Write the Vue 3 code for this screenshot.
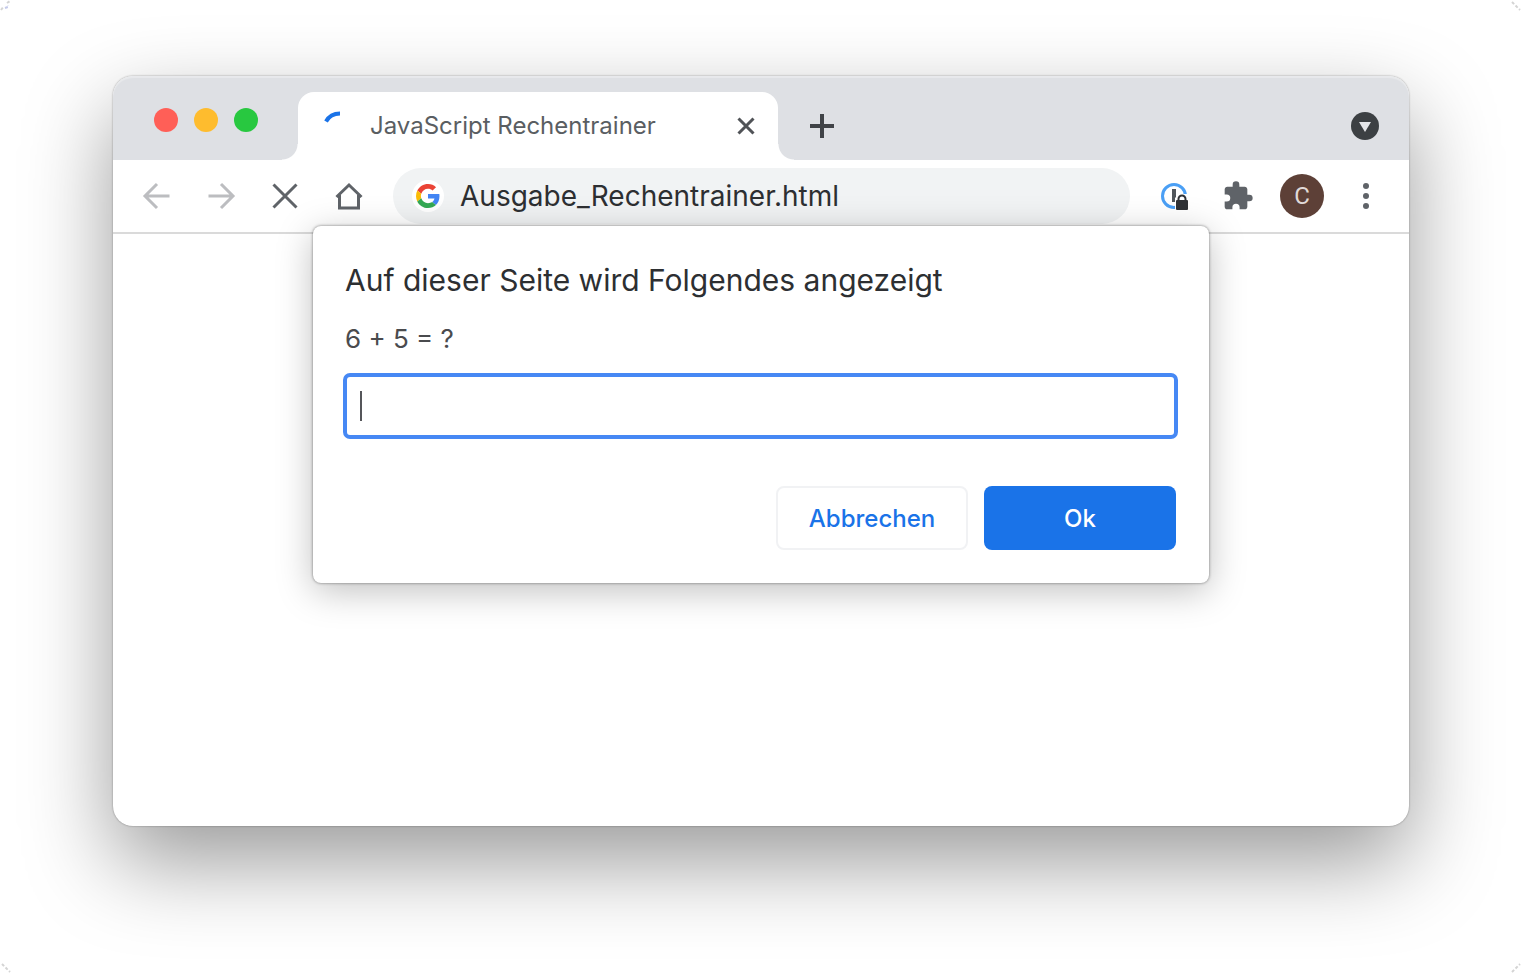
<script setup>
import { ref } from 'vue'

const address = ref('Ausgabe_Rechentrainer.html')
const answer = ref('')
</script>

<template>
  <main class="desktop">
    <svg class="mark mark-tl" viewBox="0 0 12 12" aria-hidden="true">
      <path d="M1 10L4 6M7 3l3-2" />
      <path class="tint" d="M5 8l3-1V5" />
    </svg>
    <svg class="mark mark-tr" viewBox="0 0 12 12" aria-hidden="true"><path d="M2 2l8 8" /></svg>
    <svg class="mark mark-bl" viewBox="0 0 12 12" aria-hidden="true"><path d="M2 2l8 8" /></svg>
    <svg class="mark mark-br" viewBox="0 0 12 12" aria-hidden="true"><path d="M2 10l8-8" /></svg>

    <section class="window">
      <header class="tabstrip">
        <div class="lights">
          <button class="light red" aria-label="Schließen"></button>
          <button class="light yellow" aria-label="Minimieren"></button>
          <button class="light green" aria-label="Maximieren"></button>
        </div>
        <div class="tab">
          <svg class="spinner" viewBox="0 0 32 32" aria-hidden="true">
            <path d="M6 11.500C9 6 14 3.500 20 3.500" />
          </svg>
          <span class="tab-title">JavaScript Rechentrainer</span>
          <button class="tab-close" aria-label="Tab schließen">
            <svg viewBox="0 0 20 20"><path d="M2.500 2.500l15 15M17.500 2.500l-15 15" /></svg>
          </button>
        </div>
        <button class="new-tab" aria-label="Neuer Tab">
          <svg viewBox="0 0 24 24"><path d="M12 0v24M0 12h24" /></svg>
        </button>
        <button class="tab-search" aria-label="Tabs durchsuchen">
          <svg viewBox="0 0 28 28">
            <circle cx="14" cy="14" r="14" />
            <path d="M8 10h12l-6 10z" />
          </svg>
        </button>
      </header>

      <nav class="toolbar">
        <button class="tool dim" aria-label="Zurück">
          <svg viewBox="0 0 32 32"><path d="M28.500 16H4.500M16 4L4 16l12 12" /></svg>
        </button>
        <button class="tool dim" aria-label="Vorwärts">
          <svg viewBox="0 0 32 32"><path d="M3.500 16h24M16 4l12 12-12 12" /></svg>
        </button>
        <button class="tool" aria-label="Laden abbrechen">
          <svg viewBox="0 0 32 32"><path class="heavy" d="M4.500 4.500l23 23M27.500 4.500l-23 23" /></svg>
        </button>
        <button class="tool" aria-label="Startseite">
          <svg viewBox="0 0 32 32">
            <path class="heavy" d="M3.500 17L16 5l12.500 12M6.500 15v13h19V15" />
          </svg>
        </button>
        <div class="omnibox">
          <span class="favicon">
            <svg viewBox="0 0 48 48" aria-hidden="true">
              <path fill="#ea4335" d="M24 9.500c3.540 0 6.710 1.220 9.210 3.600l6.850-6.850C35.900 2.380 30.470 0 24 0 14.620 0 6.510 5.380 2.560 13.220l7.980 6.190C12.430 13.720 17.740 9.500 24 9.500z" />
              <path fill="#4285f4" d="M46.980 24.550c0-1.570-.15-3.090-.38-4.550H24v9.020h12.940c-.58 2.960-2.260 5.480-4.780 7.180l7.730 6c4.510-4.180 7.090-10.360 7.090-17.650z" />
              <path fill="#fbbc05" d="M10.530 28.590A14.500 14.500 0 0 1 9.770 24c0-1.600.27-3.140.76-4.590l-7.980-6.190A23.900 23.900 0 0 0 0 24c0 3.880.92 7.540 2.560 10.780z" />
              <path fill="#34a853" d="M24 48c6.480 0 11.930-2.130 15.890-5.810l-7.730-6c-2.150 1.450-4.920 2.300-8.160 2.300-6.260 0-11.570-4.220-13.470-9.910l-7.980 6.190C6.510 42.620 14.620 48 24 48z" />
            </svg>
          </span>
          <input v-model="address" class="address" type="text" aria-label="Adresse" spellcheck="false" />
        </div>
        <button class="tool extension" aria-label="Passwortmanager">
          <svg viewBox="0 0 32 32">
            <circle class="ring" cx="16" cy="16" r="11.500" />
            <rect x="14" y="9" width="4" height="13" fill="#51565b" />
            <path d="M17 30V18l4-4h9v16z" fill="#fff" />
            <rect x="18" y="20" width="12" height="10" rx="1" fill="#303236" />
            <path d="M20.500 21v-2a3.500 3.500 0 0 1 7 0v2" fill="none" stroke="#303236" stroke-width="2" />
          </svg>
        </button>
        <button class="tool extension" aria-label="Erweiterungen">
          <svg viewBox="0 0 24 24">
            <path fill="#5f6368" d="M20.500 11H19V7c0-1.100-.9-2-2-2h-4V3.500a2.500 2.500 0 0 0-5 0V5H4c-1.100 0-1.990.9-1.990 2v3.800H3.500a2.700 2.700 0 0 1 0 5.400H2V20c0 1.100.9 2 2 2h3.800v-1.500a2.700 2.700 0 0 1 5.400 0V22H17c1.100 0 2-.9 2-2v-4h1.500a2.500 2.500 0 0 0 0-5z" />
          </svg>
        </button>
        <button class="avatar" aria-label="Profil">C</button>
        <button class="tool menu" aria-label="Menü">
          <svg viewBox="0 0 32 32">
            <circle cx="16" cy="6" r="3" />
            <circle cx="16" cy="16" r="3" />
            <circle cx="16" cy="26" r="3" />
          </svg>
        </button>
      </nav>

      <form class="dialog" role="dialog" aria-labelledby="dialog-title" @submit.prevent>
        <h1 id="dialog-title">Auf dieser Seite wird Folgendes angezeigt</h1>
        <label for="answer">6 + 5 = ?</label>
        <div class="field">
          <input id="answer" v-model="answer" type="text" autocomplete="off" />
          <span v-if="!answer" class="caret"></span>
        </div>
        <div class="actions">
          <button type="button" class="cancel">Abbrechen</button>
          <button type="submit" class="ok">Ok</button>
        </div>
      </form>
    </section>
  </main>
</template>

<style>
body {
  margin: 0;
  background: #fff;
}
</style>

<style scoped>
* {
  box-sizing: border-box;
}

button,
input {
  margin: 0;
  padding: 0;
  border: 0;
  background: none;
  color: inherit;
  font: inherit;
}

button {
  flex: none;
  cursor: pointer;
}

svg {
  display: block;
}

.desktop {
  position: relative;
  display: flex;
  min-height: 100vh;
  padding: 76px 113px 148px;
  overflow: hidden;
  font-family: Inter, "Liberation Sans", sans-serif;
}

.mark {
  position: absolute;
  width: 12px;
  height: 12px;
  fill: none;
  stroke: #d4d4d4;
  stroke-width: 2;
  stroke-dasharray: 3 2;
}

.mark .tint {
  stroke: #c3c9ea;
}

.mark-tl {
  top: 0;
  left: 0;
}

.mark-tr {
  top: 0;
  right: 0;
}

.mark-bl {
  bottom: 0;
  left: 0;
}

.mark-br {
  bottom: 0;
  right: 0;
}

.window {
  position: relative;
  flex: 1;
  border-radius: 20px;
  background: #fff;
  box-shadow: 0 0 2px rgba(0, 0, 0, 0.4), 0 36px 88px rgba(0, 0, 0, 0.4);
}

.tabstrip {
  display: flex;
  height: 84px;
  padding: 16px 30px 0 41px;
  border-radius: 20px 20px 0 0;
  background: #dee0e4;
  box-shadow: inset 0 2px 1px rgba(255, 255, 255, 0.3);
}

.lights {
  display: flex;
  gap: 16px;
  padding-top: 16px;
}

.light {
  width: 24px;
  height: 24px;
  border-radius: 50%;
}

.red {
  background: #ff5f57;
}

.yellow {
  background: #febc2e;
}

.green {
  background: #28c840;
}

.tab {
  position: relative;
  display: flex;
  align-items: center;
  width: 480px;
  margin-left: 40px;
  padding: 0 22px;
  border-radius: 16px 16px 0 0;
  background: #fff;
}

.tab::before,
.tab::after {
  position: absolute;
  bottom: 0;
  width: 16px;
  height: 16px;
  content: "";
}

.tab::before {
  right: 100%;
  background: radial-gradient(circle at 0 0, transparent 15px, #fff 16px);
}

.tab::after {
  left: 100%;
  background: radial-gradient(circle at 100% 0, transparent 15px, #fff 16px);
}

.spinner {
  width: 32px;
  height: 32px;
  fill: none;
  stroke: #1a73e8;
  stroke-width: 4;
}

.tab-title {
  flex: 1;
  padding-left: 18px;
  color: #5a5e62;
  font-size: 24px;
  line-height: 32px;
}

.tab-close svg {
  width: 20px;
  height: 20px;
  fill: none;
  stroke: #505357;
  stroke-width: 3;
}

.new-tab {
  margin-left: 32px;
}

.new-tab svg {
  width: 24px;
  height: 24px;
  fill: none;
  stroke: #404347;
  stroke-width: 4;
}

.tab-search {
  margin-left: auto;
}

.tab-search svg {
  width: 28px;
  height: 28px;
  fill: #3c4043;
}

.tab-search path {
  fill: #e4e6e9;
}

.toolbar {
  display: flex;
  align-items: center;
  height: 74px;
  padding: 0 27px 0 28px;
  border-bottom: 2px solid #dadada;
}

.tool svg {
  width: 32px;
  height: 32px;
  fill: none;
  stroke: #5f6368;
  stroke-width: 2;
}

.tool + .tool {
  margin-left: 32px;
}

.tool.dim svg {
  stroke: #bcbdc0;
  stroke-width: 3;
}

.tool .heavy {
  stroke-width: 3;
}

.omnibox {
  display: flex;
  flex: 1;
  align-items: center;
  height: 56px;
  margin: 0 28px;
  padding: 0 19px;
  border-radius: 28px;
  background: #f1f3f4;
}

.favicon {
  display: grid;
  flex: none;
  place-items: center;
  width: 32px;
  height: 32px;
  border-radius: 50%;
  background: #fff;
}

.favicon svg {
  width: 24px;
  height: 24px;
}

.address {
  flex: 1;
  min-width: 0;
  margin-left: 16px;
  color: #2d2f32;
  font-size: 28px;
  line-height: 40px;
}

.tool.extension svg {
  stroke: none;
}

.tool.extension .ring {
  fill: none;
  stroke: #4a9ff5;
  stroke-width: 3;
}

.avatar {
  width: 44px;
  height: 44px;
  margin: 0 26px;
  border-radius: 50%;
  background: #5d4037;
  color: #e0dad8;
  font-family: Roboto, sans-serif;
  font-size: 24px;
  line-height: 44px;
}

.tool.menu svg {
  fill: #5f6368;
  stroke: none;
}

.dialog {
  position: absolute;
  top: 150px;
  left: 50%;
  width: 896px;
  max-width: 100%;
  padding: 34px 33px 33px 32px;
  border-radius: 8px;
  background: #fff;
  box-shadow: 0 0 3px rgba(0, 0, 0, 0.5), 0 8px 36px rgba(0, 0, 0, 0.25);
  color: #2d2f32;
  transform: translateX(-50%);
}

h1 {
  margin: 0;
  font-size: 30px;
  font-weight: 400;
  line-height: 40px;
}

label {
  display: block;
  margin-top: 23px;
  color: #4a4b4e;
  font-size: 26px;
  line-height: 32px;
}

.field {
  position: relative;
  margin: 18px -2px 0;
}

.field input {
  display: block;
  width: 100%;
  height: 66px;
  padding: 0 16px;
  border: 4px solid #4688f4;
  border-radius: 7px;
  outline: 0;
  font-size: 26px;
}

.caret {
  position: absolute;
  top: 18px;
  left: 17px;
  width: 2px;
  height: 30px;
  background: #55565a;
}

.actions {
  display: flex;
  justify-content: flex-end;
  gap: 16px;
  margin-top: 47px;
}

.actions button {
  width: 192px;
  height: 64px;
  border-radius: 8px;
  font-size: 24px;
  font-weight: 500;
}

.actions .cancel {
  border: 2px solid #f1f2f4;
  color: #1a73e8;
}

.actions .ok {
  background: #1a73e8;
  color: #fff;
}
</style>
